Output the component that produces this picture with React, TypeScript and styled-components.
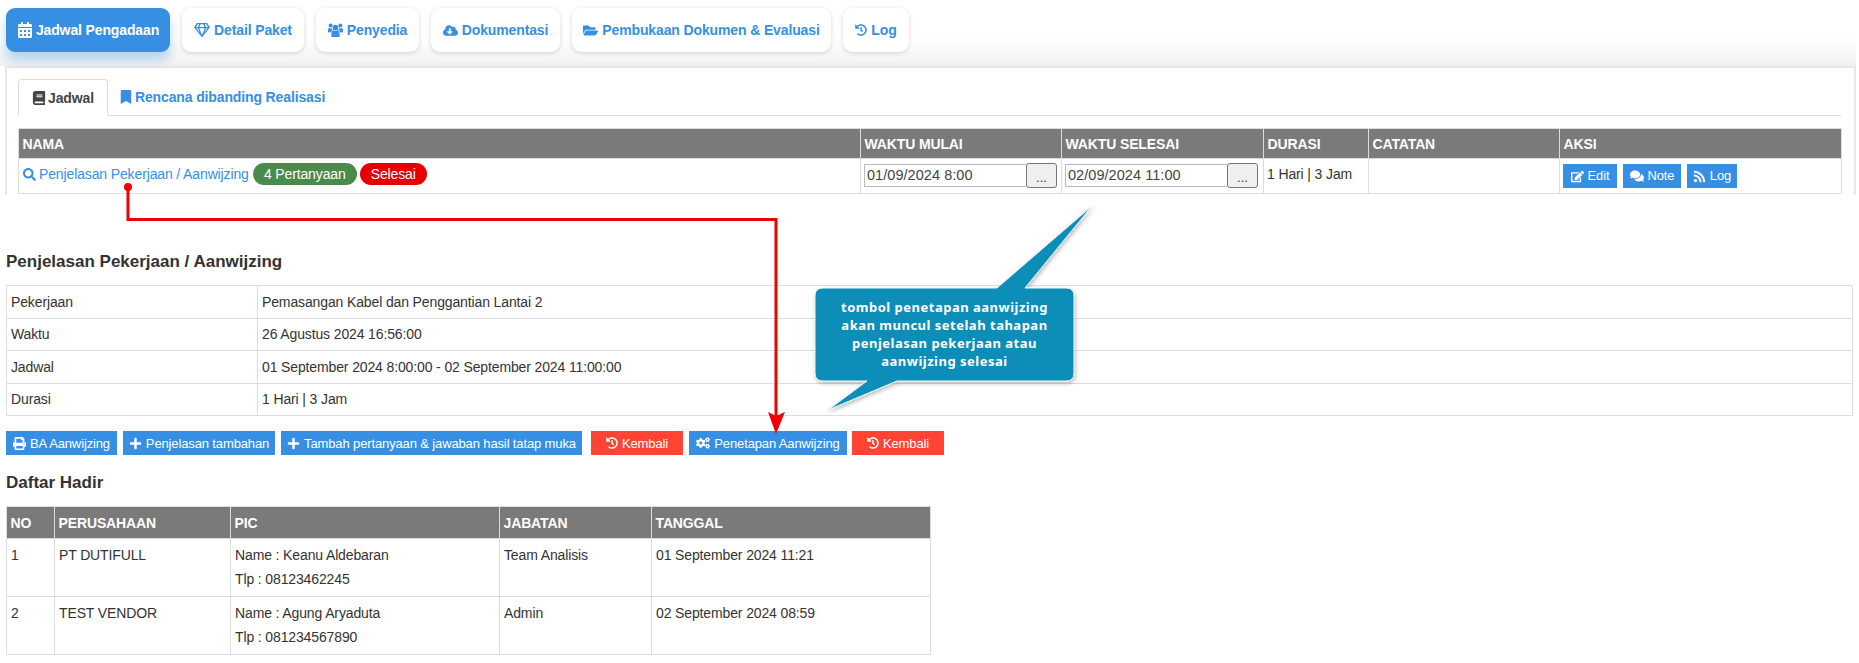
import React from "react";
import styled, { createGlobalStyle } from "styled-components";
import {
  FaCalendarAlt, FaRegGem, FaCloudDownloadAlt, FaFolderOpen, FaHistory, FaBook, FaBookmark,
  FaSearch, FaPrint, FaPlus, FaCogs, FaEdit, FaComments, FaRss,
} from "react-icons/fa";

const Global = createGlobalStyle`
  html, body { margin: 0; padding: 0; background: #fff; }
  body { font-family: "Liberation Sans", Arial, sans-serif; font-size: 14px; color: #333; letter-spacing: -0.13px; }
  * { box-sizing: border-box; }
`;

const BLUE = "#368fe3";

const Page = styled.div`
  position: relative;
  width: 1859px;
  height: 663px;
  overflow: hidden;
`;

const Top = styled.div`
  height: 66px;
  width: 1856px;
  padding: 8px 0 0 6px;
  display: flex;
  gap: 12px;
  background: linear-gradient(to bottom, #fff 55%, #f1f1f1 100%);
`;

const NavButton = styled.a<{ $active?: boolean; $w: number }>`
  width: ${(p) => p.$w}px;
  height: 44px;
  display: flex;
  align-items: center;
  justify-content: center;
  gap: ${(p) => (p.$active ? 3 : 4)}px;
  border-radius: 9px;
  font-weight: 700;
  font-size: 14px;
  color: ${(p) => (p.$active ? "#fff" : BLUE)};
  background: ${(p) => (p.$active ? BLUE : "#fff")};
  box-shadow: ${(p) => (p.$active ? "0 8px 12px rgba(54,143,227,.35)" : "0 1px 4px rgba(0,0,0,.16)")};
`;

const Panel = styled.div`
  margin-left: 5px;
  width: 1851px;
  height: 129px;
  border: 2px solid #e8e8e8;
  border-bottom: 0;
  padding: 11px 10px 0 11px;
  background: #fff;
`;

const TabRow = styled.div`
  height: 37px;
  width: 1823px;
  display: flex;
  border-bottom: 1px solid #ddd;
`;

const Tab = styled.a<{ $active?: boolean }>`
  height: ${(p) => (p.$active ? 37 : 36)}px;
  display: flex;
  align-items: center;
  gap: 2px;
  padding: 0 13px 0 ${(p) => (p.$active ? 13 : 11)}px;
  font-weight: 700;
  font-size: 14px;
  color: ${(p) => (p.$active ? "#444" : BLUE)};
  background: #fff;
  border: ${(p) => (p.$active ? "1px solid #ddd" : "0")};
  border-bottom: ${(p) => (p.$active ? "1px solid #fff" : "0")};
  border-radius: 4px 4px 0 0;
  svg { font-size: 14px; }
`;

const Table = styled.table<{ $w: number }>`
  width: ${(p) => p.$w}px;
  table-layout: fixed;
  border-collapse: collapse;
`;

const ScheduleTable = styled(Table)`
  margin-top: 12px;
`;

const Th = styled.th<{ $h?: number }>`
  height: ${(p) => p.$h ?? 30}px;
  padding: 0 3.5px;
  background: #7a7a7a;
  color: #fff;
  font-size: 14px;
  font-weight: 700;
  text-align: left;
  border: 1px solid #ddd;
`;

const Td = styled.td`
  padding: 5px 3px;
  vertical-align: top;
  font-size: 14px;
  line-height: 20px;
  color: #333;
  border: 1px solid #ddd;
`;

const ScheduleRow = styled.tr`
  height: 33px;
`;

const NameCell = styled.div`
  display: flex;
  align-items: center;
  height: 22px;
  margin-top: -1px;
  gap: 3px;
`;

const Link = styled.a`
  color: ${BLUE};
  display: inline-flex;
  align-items: center;
  gap: 3px;
  padding: 0 1px;
  svg { font-size: 13px; }
`;

const Pill = styled.span<{ $bg: string; $w: number }>`
  width: ${(p) => p.$w}px;
  height: 22px;
  border-radius: 11px;
  background: ${(p) => p.$bg};
  color: #fff;
  font-size: 14px;
  display: flex;
  align-items: center;
  justify-content: center;
`;

const DateGroup = styled.div`
  display: flex;
  align-items: center;
  margin-top: -1px;
  height: 25px;
`;

const DateInput = styled.div`
  width: 162px;
  height: 23px;
  padding-left: 2px;
  border: 1px solid #bbb;
  border-right: 0;
  font-size: 14.5px;
  letter-spacing: 0.05px;
  line-height: 21px;
  color: #444;
`;

const DotsButton = styled.button`
  width: 31px;
  height: 25px;
  padding: 3px 0 0;
  border: 1px solid #767676;
  border-radius: 3px;
  background: #efefef;
  font-family: inherit;
  font-size: 13px;
  color: #333;
`;

const ActionRow = styled.div`
  display: flex;
  gap: 6px;
`;

const SmallButton = styled.a<{ $w: number; $danger?: boolean; $mr?: number }>`
  width: ${(p) => p.$w}px;
  height: 24px;
  display: inline-flex;
  align-items: center;
  justify-content: center;
  gap: 4px;
  font-size: 13px;
  color: #fff;
  white-space: nowrap;
  background: ${(p) => (p.$danger ? "#ff4433" : BLUE)};
  margin-right: ${(p) => p.$mr ?? 0}px;
  svg { font-size: 13px; }
`;

const Heading = styled.h3<{ $top: number; $bottom: number }>`
  margin: ${(p) => p.$top}px 0 ${(p) => p.$bottom}px 6px;
  font-size: 17px;
  letter-spacing: 0;
  line-height: 20px;
  font-weight: 700;
  color: #333;
`;

const Section = styled.div`
  padding-left: 6px;
`;

const DetailRow = styled.tr`
  height: 32.5px;
`;

const DetailCell = styled(Td)`
  padding: 0 4px;
  vertical-align: middle;
`;

const ButtonBar = styled.div`
  display: flex;
  gap: 6px;
  margin: 15px 0 0 6px;
`;

const Line = styled.div`
  line-height: 24px;
`;

const HadirCell = styled(Td)`
  padding: 4px 4px 5px;
  line-height: 24px;
`;

const HadirRow = styled.tr<{ $h: number }>`
  height: ${(p) => p.$h}px;
`;

const Overlay = styled.svg`
  position: absolute;
  left: 0;
  top: 0;
  pointer-events: none;
`;

const CalloutText = styled.div`
  position: absolute;
  left: 815px;
  top: 298px;
  width: 259px;
  text-align: center;
  font-family: "Noto Sans", "DejaVu Sans", sans-serif;
  font-weight: 700;
  font-size: 13px;
  line-height: 18px;
  letter-spacing: 0.5px;
  color: #fff;
`;

const UsersIcon = () => (
  <svg width="15" height="14" viewBox="0 0 15 14" fill="currentColor">
    <circle cx="7.5" cy="4.6" r="2.9" />
    <circle cx="2.6" cy="2.6" r="2" />
    <circle cx="12.4" cy="2.6" r="2" />
    <path d="M3.4 14 V10 Q3.4 7.4 5.4 7.2 Q7.5 8.6 9.6 7.2 Q11.6 7.4 11.6 10 V14 Z" />
    <path d="M0 9.2 V6.6 Q0 5 1.4 5 Q2.6 5.7 3.9 5.3 Q4.1 6.3 4.7 7 Q3 7.5 2.7 9.6 Z" />
    <path d="M15 9.2 V6.6 Q15 5 13.6 5 Q12.4 5.7 11.1 5.3 Q10.9 6.3 10.3 7 Q12 7.5 12.3 9.6 Z" />
  </svg>
);

const navItems = [
  { w: 164, icon: <FaCalendarAlt size={16} />, label: "Jadwal Pengadaan", active: true },
  { w: 122, icon: <FaRegGem size={16} />, label: "Detail Paket" },
  { w: 103, icon: <UsersIcon />, label: "Penyedia" },
  { w: 129, icon: <FaCloudDownloadAlt size={15} />, label: "Dokumentasi" },
  { w: 259, icon: <FaFolderOpen size={15} />, label: "Pembukaan Dokumen & Evaluasi" },
  { w: 66, icon: <FaHistory size={12} />, label: "Log" },
];

const details = [
  ["Pekerjaan", "Pemasangan Kabel dan Penggantian Lantai 2"],
  ["Waktu", "26 Agustus 2024 16:56:00"],
  ["Jadwal", "01 September 2024 8:00:00 - 02 September 2024 11:00:00"],
  ["Durasi", "1 Hari | 3 Jam"],
];

const hadir = [
  { no: 1, co: "PT DUTIFULL", name: "Keanu Aldebaran", tlp: "08123462245", job: "Team Analisis", date: "01 September 2024 11:21", h: 56 },
  { no: 2, co: "TEST VENDOR", name: "Agung Aryaduta", tlp: "081234567890", job: "Admin", date: "02 September 2024 08:59", h: 58 },
];

export default function App() {
  return (
    <Page>
      <Global />
      <Top>
        {navItems.map((n) => (
          <NavButton key={n.label} $w={n.w} $active={n.active}>
            {n.icon}
            {n.label}
          </NavButton>
        ))}
      </Top>
      <Panel>
        <TabRow>
          <Tab $active><FaBook />Jadwal</Tab>
          <Tab><FaBookmark />Rencana dibanding Realisasi</Tab>
        </TabRow>
        <ScheduleTable $w={1823}>
          <colgroup>
            <col width={842} /><col width={201} /><col width={202} /><col width={105} /><col width={191} /><col width={282} />
          </colgroup>
          <thead>
            <tr>
              <Th>NAMA</Th><Th>WAKTU MULAI</Th><Th>WAKTU SELESAI</Th><Th>DURASI</Th><Th>CATATAN</Th><Th>AKSI</Th>
            </tr>
          </thead>
          <tbody>
            <ScheduleRow>
              <Td>
                <NameCell>
                  <Link><FaSearch />Penjelasan Pekerjaan / Aanwijzing</Link>
                  <Pill $bg="#4a8a4a" $w={104}>4 Pertanyaan</Pill>
                  <Pill $bg="#e60000" $w={67}>Selesai</Pill>
                </NameCell>
              </Td>
              <Td>
                <DateGroup><DateInput>01/09/2024 8:00</DateInput><DotsButton>...</DotsButton></DateGroup>
              </Td>
              <Td>
                <DateGroup><DateInput>02/09/2024 11:00</DateInput><DotsButton>...</DotsButton></DateGroup>
              </Td>
              <Td>1 Hari | 3 Jam</Td>
              <Td />
              <Td>
                <ActionRow>
                  <SmallButton $w={54}><FaEdit />Edit</SmallButton>
                  <SmallButton $w={58}><FaComments size={14} />Note</SmallButton>
                  <SmallButton $w={50}><FaRss />Log</SmallButton>
                </ActionRow>
              </Td>
            </ScheduleRow>
          </tbody>
        </ScheduleTable>
      </Panel>

      <Heading $top={57} $bottom={13}>Penjelasan Pekerjaan / Aanwijzing</Heading>
      <Section>
        <Table $w={1847}>
          <colgroup><col width={251} /><col /></colgroup>
          <tbody>
            {details.map(([k, v]) => (
              <DetailRow key={k}>
                <DetailCell>{k}</DetailCell>
                <DetailCell>{v}</DetailCell>
              </DetailRow>
            ))}
          </tbody>
        </Table>
      </Section>
      <ButtonBar>
        <SmallButton $w={111}><FaPrint />BA Aanwijzing</SmallButton>
        <SmallButton $w={152}><FaPlus />Penjelasan tambahan</SmallButton>
        <SmallButton $w={301} $mr={3}><FaPlus />Tambah pertanyaan &amp; jawaban hasil tatap muka</SmallButton>
        <SmallButton $w={92} $danger><FaHistory size={12} />Kembali</SmallButton>
        <SmallButton $w={158} $mr={-1}><FaCogs size={14} />Penetapan Aanwijzing</SmallButton>
        <SmallButton $w={92} $danger><FaHistory size={12} />Kembali</SmallButton>
      </ButtonBar>

      <Heading $top={18} $bottom={13}>Daftar Hadir</Heading>
      <Section>
        <Table $w={924}>
          <colgroup>
            <col width={48} /><col width={176} /><col width={269} /><col width={152} /><col width={279} />
          </colgroup>
          <thead>
            <tr>
              <Th $h={32}>NO</Th><Th $h={32}>PERUSAHAAN</Th><Th $h={32}>PIC</Th><Th $h={32}>JABATAN</Th><Th $h={32}>TANGGAL</Th>
            </tr>
          </thead>
          <tbody>
            {hadir.map((r) => (
              <HadirRow key={r.no} $h={r.h}>
                <HadirCell>{r.no}</HadirCell>
                <HadirCell>{r.co}</HadirCell>
                <HadirCell>
                  <Line>Name : {r.name}</Line>
                  <Line>Tlp : {r.tlp}</Line>
                </HadirCell>
                <HadirCell>{r.job}</HadirCell>
                <HadirCell>{r.date}</HadirCell>
              </HadirRow>
            ))}
          </tbody>
        </Table>
      </Section>

      <Overlay width={1859} height={663} viewBox="0 0 1859 663">
        <defs>
          <filter id="callout-shadow" x="-20%" y="-20%" width="140%" height="140%">
            <feDropShadow dx="1" dy="2" stdDeviation="2" floodColor="#000" floodOpacity="0.28" />
          </filter>
        </defs>
        <circle cx={128} cy={187} r={4} fill="#f00000" />
        <path d="M128 187 V219.5 H776 V416" fill="none" stroke="#f00000" strokeWidth={3} />
        <path d="M768 412 L776 416 L785 412 L776 434 Z" fill="#f00000" />
        <path
          d="M823 288 H997 L1092 206 L1025 288 H1066 Q1074 288 1074 296 V373 Q1074 381 1066 381 H897 L828 410 L867 381 H823 Q815 381 815 373 V296 Q815 288 823 288 Z"
          fill="#0d8eb8"
          stroke="#eaf5f8"
          strokeWidth={1}
          filter="url(#callout-shadow)"
        />
      </Overlay>
      <CalloutText>
        tombol penetapan aanwijzing<br />
        akan muncul setelah tahapan<br />
        penjelasan pekerjaan atau<br />
        aanwijzing selesai
      </CalloutText>
    </Page>
  );
}
